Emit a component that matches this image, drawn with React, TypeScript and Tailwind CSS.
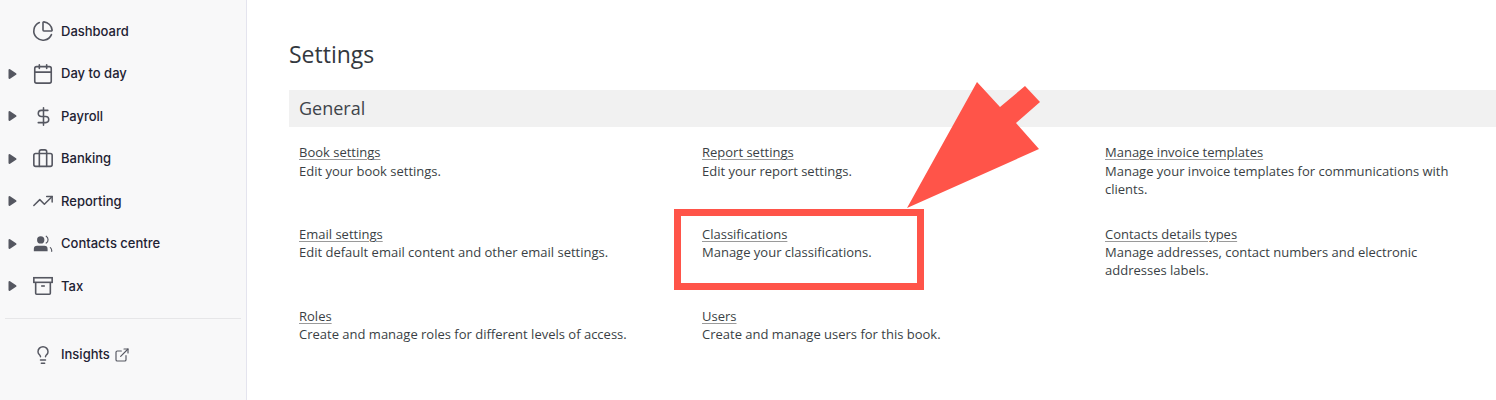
import { Briefcase, Calendar, ChartPie, DollarSign, ExternalLink, Lightbulb, TrendingUp } from "lucide-react";
import type { ReactNode } from "react";

function ContactsIcon() {
  return (
    <svg width="22" height="22" viewBox="0 0 24 24" fill="none" stroke="currentColor" strokeWidth="1.25" strokeLinecap="round">
      <circle cx="9.5" cy="7.5" r="4" fill="currentColor" stroke="none" />
      <path d="M2 20v-2.5a3.5 3.5 0 0 1 3.5-3.5h8a3.5 3.5 0 0 1 3.5 3.5V20z" fill="currentColor" stroke="none" />
      <path d="M15.5 3.5a4.5 4.5 0 0 1 0 7.5" />
      <path d="M20 16a4 4 0 0 1 1.5 3v1" />
    </svg>
  );
}

function TaxIcon() {
  return (
    <svg width="22" height="22" viewBox="0 0 24 24" fill="none" stroke="currentColor" strokeWidth="1.75">
      <rect x="2" y="3" width="20" height="5" />
      <path d="M4 8v12a1 1 0 0 0 1 1h14a1 1 0 0 0 1-1V8" />
      <path d="M10 12h4" />
    </svg>
  );
}

const navItems: { label: string; icon: ReactNode; caret?: boolean }[] = [
  { label: "Dashboard", icon: <ChartPie size={22} strokeWidth={1.75} /> },
  { label: "Day to day", icon: <Calendar size={22} strokeWidth={1.75} />, caret: true },
  { label: "Payroll", icon: <DollarSign size={21} strokeWidth={1.75} />, caret: true },
  { label: "Banking", icon: <Briefcase size={22} strokeWidth={1.75} />, caret: true },
  { label: "Reporting", icon: <TrendingUp size={24} strokeWidth={1.6} />, caret: true },
  { label: "Contacts centre", icon: <ContactsIcon />, caret: true },
  { label: "Tax", icon: <TaxIcon />, caret: true },
];

const settings = [
  { title: "Book settings", text: "Edit your book settings." },
  { title: "Report settings", text: "Edit your report settings." },
  { title: "Manage invoice templates", text: "Manage your invoice templates for communications with clients." },
  { title: "Email settings", text: "Edit default email content and other email settings." },
  { title: "Classifications", text: "Manage your classifications." },
  { title: "Contacts details types", text: "Manage addresses, contact numbers and electronic addresses labels." },
  { title: "Roles", text: "Create and manage roles for different levels of access." },
  { title: "Users", text: "Create and manage users for this book." },
];

function Caret() {
  return (
    <svg width="9" height="12" viewBox="0 0 9 12" fill="#555761" stroke="#555761" strokeWidth="2" strokeLinejoin="round">
      <polygon points="1.5,2 7.5,6 1.5,10" />
    </svg>
  );
}

export default function App() {
  return (
    <div className="relative flex h-[400px] w-[1496px] overflow-hidden bg-white font-['Open_Sans',sans-serif] text-[#3a3f45]">
      <aside className="h-full w-[247px] shrink-0 border-r border-[#e4e4ee] bg-[#f8f8f9] pt-[10px] font-['Inter',sans-serif] text-[13px] font-[550] text-[#1e2233]">
        {navItems.map((item) => (
          <div key={item.label} className="flex h-[42.5px] items-center">
            <div className="flex w-[32px] pl-[8px]">{item.caret && <Caret />}</div>
            <div className="flex w-[22px] justify-center text-[#555761]">{item.icon}</div>
            <span className="ml-[7px]">{item.label}</span>
          </div>
        ))}
        <div className="mx-[5px] mt-[10px] border-t border-[#e6e6e8]" />
        <div className="mt-[15px] flex h-[42px] items-center pl-[32px]">
          <div className="flex w-[22px] justify-center text-[#555761]">
            <Lightbulb size={20} strokeWidth={1.75} />
          </div>
          <span className="ml-[7px]">Insights</span>
          <ExternalLink size={16} strokeWidth={1.75} className="ml-[4px] text-[#555761]" />
        </div>
      </aside>

      <main className="min-w-0 flex-1 pl-[42px] pt-[38px]">
        <h1 className="text-[23px] leading-[33px] text-[#33383e]">Settings</h1>
        <h2 className="mt-[19px] h-[37px] bg-[#f1f1f1] pl-[10px] text-[18px] leading-[37px] text-[#3f444a]">General</h2>
        <div className="mt-[16.4px] grid grid-cols-[403px_403px_363px] gap-y-[27.1px] pl-[10px] text-[13px] leading-[18.2px]">
          {settings.map((s) => (
            <div key={s.title} className="h-[54.6px]">
              <a className="underline decoration-[#9a9a9a] underline-offset-2">{s.title}</a>
              <p>{s.text}</p>
            </div>
          ))}
        </div>
      </main>

      <div className="absolute left-[674px] top-[209px] h-[81px] w-[250px] border-[7px] border-[#ff5449]" />
      <svg className="absolute left-0 top-0" width="1496" height="400" fill="#ff5449">
        <polygon points="907,208 977,82 1000,107 1025,86 1040,102 1016,123 1039,149" />
      </svg>
    </div>
  );
}
